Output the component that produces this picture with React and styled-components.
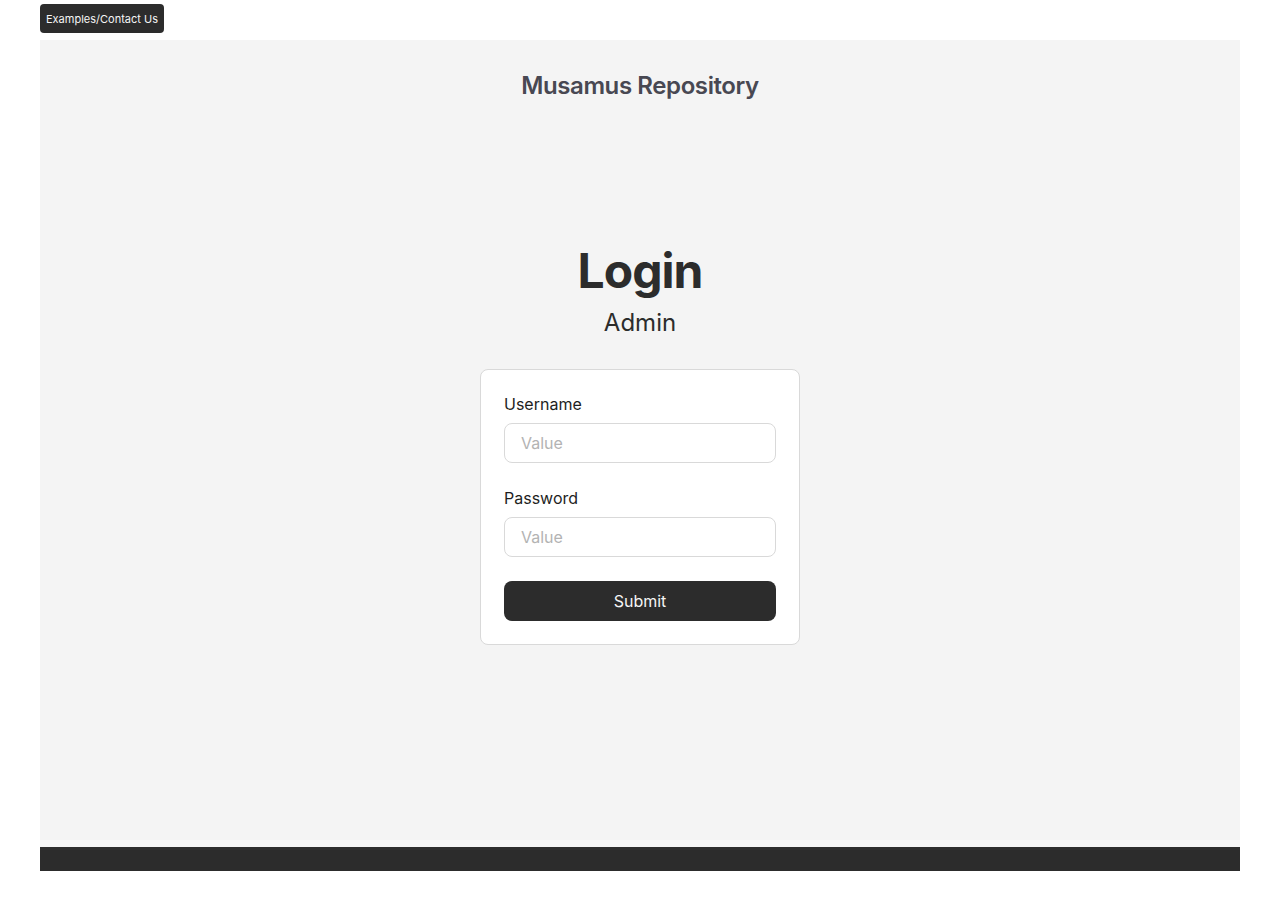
import React from "react";
import styled, { createGlobalStyle } from "styled-components";

const Global = createGlobalStyle`
  body {
    margin: 0;
    background: #ffffff;
    font-family: Inter, "Liberation Sans", sans-serif;
  }
`;

const Page = styled.div`
  padding: 4px 40px 40px;
  display: flex;
  flex-direction: column;
`;

const TopButton = styled.button`
  align-self: flex-start;
  height: 29px;
  padding: 0 6px;
  background: #2c2c2c;
  color: #f5f5f5;
  border: none;
  border-radius: 4px;
  font-family: Inter, sans-serif;
  font-size: 11px;
  cursor: pointer;
`;

const Main = styled.main`
  margin-top: 7px;
  height: 807px;
  background: #f4f4f4;
  display: flex;
  flex-direction: column;
  align-items: center;
`;

const SiteTitle = styled.h2`
  margin: 31px 0 0;
  font-size: 24px;
  line-height: 29px;
  font-weight: 600;
  color: #484852;
  letter-spacing: -0.4px;
`;

const Heading = styled.h1`
  margin: 142px 0 0;
  font-size: 48px;
  line-height: 58px;
  font-weight: 700;
  color: #2c2c2c;
  letter-spacing: -1px;
`;

const SubHeading = styled.p`
  margin: 8px 0 0;
  font-size: 24px;
  line-height: 29px;
  color: #2c2c2c;
`;

const Card = styled.form`
  margin-top: 32px;
  width: 320px;
  box-sizing: border-box;
  padding: 23px;
  background: #ffffff;
  border: 1px solid #d9d9d9;
  border-radius: 8px;
  display: flex;
  flex-direction: column;
  gap: 24px;
`;

const Field = styled.label`
  display: flex;
  flex-direction: column;
  gap: 8px;
  font-size: 16px;
  line-height: 22px;
  color: #1e1e1e;
`;

const Input = styled.input`
  height: 40px;
  box-sizing: border-box;
  padding: 0 16px;
  border: 1px solid #d9d9d9;
  border-radius: 8px;
  font-family: Inter, sans-serif;
  font-size: 16px;
  color: #1e1e1e;
  outline: none;
  &::placeholder {
    color: #b3b3b3;
  }
`;

const Submit = styled.button`
  height: 40px;
  background: #2c2c2c;
  color: #f5f5f5;
  border: none;
  border-radius: 8px;
  font-family: Inter, sans-serif;
  font-size: 16px;
  cursor: pointer;
`;

const Footer = styled.footer`
  height: 24px;
  background: #2c2c2c;
`;

export default function App() {
  return (
    <>
      <Global />
      <Page>
        <TopButton>Examples/Contact Us</TopButton>
        <Main>
          <SiteTitle>Musamus Repository</SiteTitle>
          <Heading>Login</Heading>
          <SubHeading>Admin</SubHeading>
          <Card onSubmit={(e) => e.preventDefault()}>
            <Field>
              Username
              <Input placeholder="Value" />
            </Field>
            <Field>
              Password
              <Input type="password" placeholder="Value" />
            </Field>
            <Submit type="submit">Submit</Submit>
          </Card>
        </Main>
        <Footer />
      </Page>
    </>
  );
}
